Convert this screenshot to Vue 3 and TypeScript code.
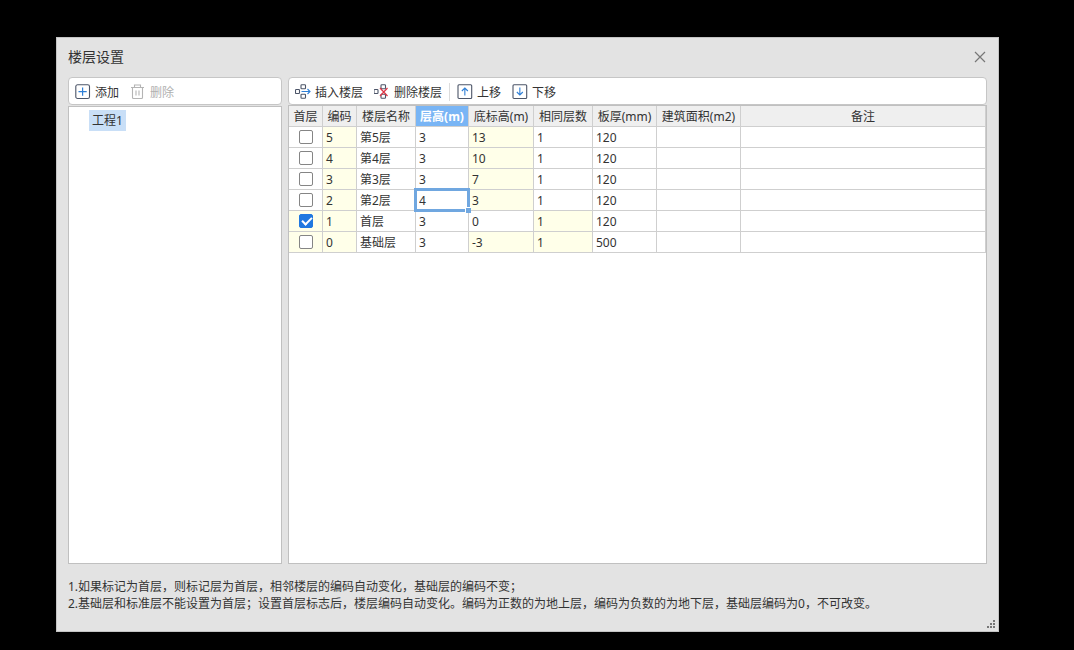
<script setup lang="ts">
import { ref } from 'vue'

interface Floor {
  first: boolean
  code: string
  name: string
  height: string
  base: string
  same: string
  slab: string
}

const floors = ref<Floor[]>([
  { first: false, code: '5', name: '第5层', height: '3', base: '13', same: '1', slab: '120' },
  { first: false, code: '4', name: '第4层', height: '3', base: '10', same: '1', slab: '120' },
  { first: false, code: '3', name: '第3层', height: '3', base: '7', same: '1', slab: '120' },
  { first: false, code: '2', name: '第2层', height: '4', base: '3', same: '1', slab: '120' },
  { first: true, code: '1', name: '首层', height: '3', base: '0', same: '1', slab: '120' },
  { first: false, code: '0', name: '基础层', height: '3', base: '-3', same: '1', slab: '500' },
])
const activeRow = 3
</script>

<template>
  <main class="screen">
    <section class="dialog" role="dialog" aria-labelledby="dialog-title">
      <header class="titlebar">
        <h1 id="dialog-title">楼层设置</h1>
        <button class="close" type="button" aria-label="关闭">
          <svg width="12" height="12" viewBox="0 0 12 12"><path d="M1 1 11 11M11 1 1 11" fill="none" stroke="#777" stroke-width="1.2" /></svg>
        </button>
      </header>

      <div class="body">
        <div class="side">
          <div class="toolbar">
            <button type="button">
              <svg width="16" height="16" viewBox="0 0 16 16" fill="none">
                <rect x="0.8" y="0.8" width="13.700" height="13.700" rx="1.8" stroke="#4c5568" stroke-width="1.1" />
                <path d="M7.600 3.500v8.200M3.500 7.600h8.200" stroke="#2f7fd6" stroke-width="1.2" />
              </svg>
              <span>添加</span>
            </button>
            <button type="button" disabled>
              <svg width="16" height="16" viewBox="0 0 16 16" fill="none" stroke="#b4b4b4" stroke-width="1.1">
                <path d="M1 3.500h13M4.500 3.500v-2.500h6v2.500M2.500 3.500v10q0 1 1 1h8q1 0 1-1v-10M6 6.500v5M9 6.500v5" />
              </svg>
              <span>删除</span>
            </button>
          </div>
          <nav class="panel tree" aria-label="工程">
            <button type="button" class="node">工程1</button>
          </nav>
        </div>

        <div class="main">
          <div class="toolbar">
            <button type="button">
              <svg width="16" height="16" viewBox="0 0 16 16" fill="none" stroke="#4c5568" stroke-width="1.1">
                <rect x="0.500" y="5.500" width="4" height="4" rx="0.8" />
                <rect x="6" y="0.800" width="4.500" height="4" rx="0.8" />
                <rect x="6" y="10.200" width="4.500" height="4" rx="0.8" />
                <path d="M6.500 7.500H15M12.500 5l2.500 2.500-2.500 2.500" stroke="#2f7fd6" />
              </svg>
              <span>插入楼层</span>
            </button>
            <button type="button">
              <svg width="16" height="16" viewBox="0 0 16 16" fill="none" stroke="#4c5568" stroke-width="1.1">
                <rect x="0" y="5.500" width="4" height="4" rx="0.8" />
                <rect x="7" y="0.800" width="4.500" height="4" rx="0.8" />
                <rect x="7" y="10.200" width="4.500" height="4" rx="0.8" />
                <path d="M6 4l7.500 8M13.500 4L6 12" stroke="#dd3545" stroke-width="1.200" />
              </svg>
              <span>删除楼层</span>
            </button>
            <i class="divider"></i>
            <button type="button">
              <svg width="16" height="16" viewBox="0 0 16 16" fill="none">
                <rect x="1" y="0.800" width="13.700" height="13.700" rx="1" stroke="#4c5568" stroke-width="1.1" />
                <path d="M7.850 11.500V4M4.850 7l3-3 3 3" stroke="#2f7fd6" stroke-width="1.1" />
              </svg>
              <span>上移</span>
            </button>
            <button type="button">
              <svg width="16" height="16" viewBox="0 0 16 16" fill="none">
                <rect x="1" y="0.800" width="13.700" height="13.700" rx="1" stroke="#4c5568" stroke-width="1.1" />
                <path d="M7.850 3.500V11M4.850 8l3 3 3-3" stroke="#2f7fd6" stroke-width="1.1" />
              </svg>
              <span>下移</span>
            </button>
          </div>
          <div class="panel">
            <table>
              <colgroup>
                <col class="w-first" /><col class="w-first" /><col class="w-name" /><col class="w-height" />
                <col class="w-base" /><col class="w-name" /><col class="w-slab" /><col class="w-area" /><col />
              </colgroup>
              <thead>
                <tr>
                  <th>首层</th>
                  <th>编码</th>
                  <th>楼层名称</th>
                  <th class="current">层高(m)</th>
                  <th>底标高(m)</th>
                  <th>相同层数</th>
                  <th>板厚(mm)</th>
                  <th>建筑面积(m2)</th>
                  <th>备注</th>
                </tr>
              </thead>
              <tbody>
                <tr v-for="(f, i) in floors" :key="f.code">
                  <td class="check" :class="{ locked: f.code === '0' || f.first }">
                    <input v-model="f.first" type="checkbox" :aria-label="f.name + ' 首层'" />
                  </td>
                  <td class="locked">{{ f.code }}</td>
                  <td>{{ f.name }}</td>
                  <td v-if="i === activeRow" class="active">
                    <input v-model="f.height" type="text" aria-label="层高(m)" />
                    <i class="frame"></i>
                  </td>
                  <td v-else>{{ f.height }}</td>
                  <td :class="{ locked: !f.first }">{{ f.base }}</td>
                  <td :class="{ locked: f.first || f.code === '0' }">{{ f.same }}</td>
                  <td>{{ f.slab }}</td>
                  <td></td>
                  <td></td>
                </tr>
              </tbody>
            </table>
          </div>
        </div>
      </div>

      <footer class="notes">
        <p>1.如果标记为首层，则标记层为首层，相邻楼层的编码自动变化，基础层的编码不变；</p>
        <p>2.基础层和标准层不能设置为首层；设置首层标志后，楼层编码自动变化。编码为正数的为地上层，编码为负数的为地下层，基础层编码为0，不可改变。</p>
      </footer>
      <svg class="grip" width="9" height="9" viewBox="0 0 9 9" fill="#777">
        <path d="M6 0h2v2h-2zM3 3h2v2h-2zM6 3h2v2h-2zM0 6h2v2h-2zM3 6h2v2h-2zM6 6h2v2h-2z" />
      </svg>
    </section>
  </main>
</template>

<style>
body {
  background: #000;
}
</style>

<style scoped>
* {
  box-sizing: border-box;
}
.screen {
  display: flex;
  height: 100vh;
  padding: 37px 75px 18px 56px;
  background: #000;
  color: #333;
  font: 12px/17px "Noto Sans", "Noto Sans CJK SC", sans-serif;
}
.dialog {
  position: relative;
  flex: 1;
  min-width: 0;
  display: flex;
  flex-direction: column;
  padding: 0 11px 19px;
  background: #e3e3e3;
  border: 1px solid #c4c4c4;
}
.titlebar {
  display: flex;
  align-items: center;
  justify-content: space-between;
  height: 39px;
  padding: 0 1px 2px 0;
}
h1 {
  margin: 0;
  font-size: 14px;
  line-height: 20px;
  font-weight: 400;
}
button {
  display: flex;
  align-items: center;
  padding: 0;
  border: 0;
  background: none;
  color: inherit;
  font: inherit;
}
.close svg,
.toolbar svg {
  display: block;
}
.body {
  flex: 1;
  min-height: 0;
  display: flex;
  gap: 6px;
}
.side {
  width: 214px;
}
.main {
  flex: 1;
  min-width: 0;
}
.side,
.main {
  display: flex;
  flex-direction: column;
}
.toolbar {
  display: flex;
  align-items: center;
  gap: 11px;
  height: 28px;
  padding: 1px 6px 0;
  background: #fff;
  border: 1px solid #c6c6c6;
  border-radius: 4px;
}
.toolbar button {
  gap: 4px;
  white-space: nowrap;
}
.toolbar span {
  padding-top: 2px;
}
.toolbar button:disabled {
  color: #b0b0b0;
}
.divider {
  width: 1px;
  height: 18px;
  margin: 0 -4px;
  background: #dcdcdc;
}
.panel {
  flex: 1;
  min-height: 0;
  background: #fff;
  border: 1px solid #c0c0c0;
}
.tree {
  margin-top: 1px;
  padding: 3px 20px;
}
.node {
  height: 21px;
  padding: 0 3px;
  background: #c9dff7;
}
table {
  width: 100%;
  table-layout: fixed;
  border-collapse: separate;
  border-spacing: 0;
}
.w-first { width: 34px; }
.w-name { width: 59px; }
.w-height { width: 53px; }
.w-base { width: 65px; }
.w-slab { width: 64px; }
.w-area { width: 84px; }
th,
td {
  height: 21px;
  padding: 1px 3px 0;
  line-height: 19px;
  text-align: left;
  white-space: nowrap;
  border-right: 1px solid #cfcfcf;
  border-bottom: 1px solid #cfcfcf;
}
th {
  padding: 1px 0 0;
  background: #efefef;
  font-weight: 400;
  text-align: center;
}
th.current {
  background: #79b5f5;
  color: #fff;
  font-weight: 700;
}
.locked {
  background: #ffffe9;
}
td.check {
  padding: 0;
}
.check input {
  appearance: none;
  display: block;
  width: 14px;
  height: 14px;
  margin: 0 auto;
  background: #fff;
  border: 1px solid #858585;
  border-radius: 2px;
}
.check input:checked {
  background: #2078e0;
  border-color: #2078e0;
}
.check input:checked::after {
  content: "";
  display: block;
  width: 4px;
  height: 8px;
  margin: 0 0 0 4px;
  border: solid #fff;
  border-width: 0 2px 2px 0;
  transform: rotate(45deg);
}
td.active {
  position: relative;
}
.active input {
  display: block;
  width: 100%;
  height: 19px;
  padding: 0;
  border: 0;
  outline: 0;
  background: none;
  color: inherit;
  font: inherit;
}
.frame {
  position: absolute;
  inset: -2px;
  border: 3px solid #70a7e0;
  pointer-events: none;
}
.frame::after {
  content: "";
  position: absolute;
  right: -4px;
  bottom: -4px;
  width: 5px;
  height: 5px;
  background: #70a7e0;
  border: solid #fff;
  border-width: 1px 0 0 1px;
}
.notes {
  margin-top: 14px;
}
.notes p {
  margin: 0;
}
.grip {
  position: absolute;
  right: 2px;
  bottom: 2px;
}
</style>
